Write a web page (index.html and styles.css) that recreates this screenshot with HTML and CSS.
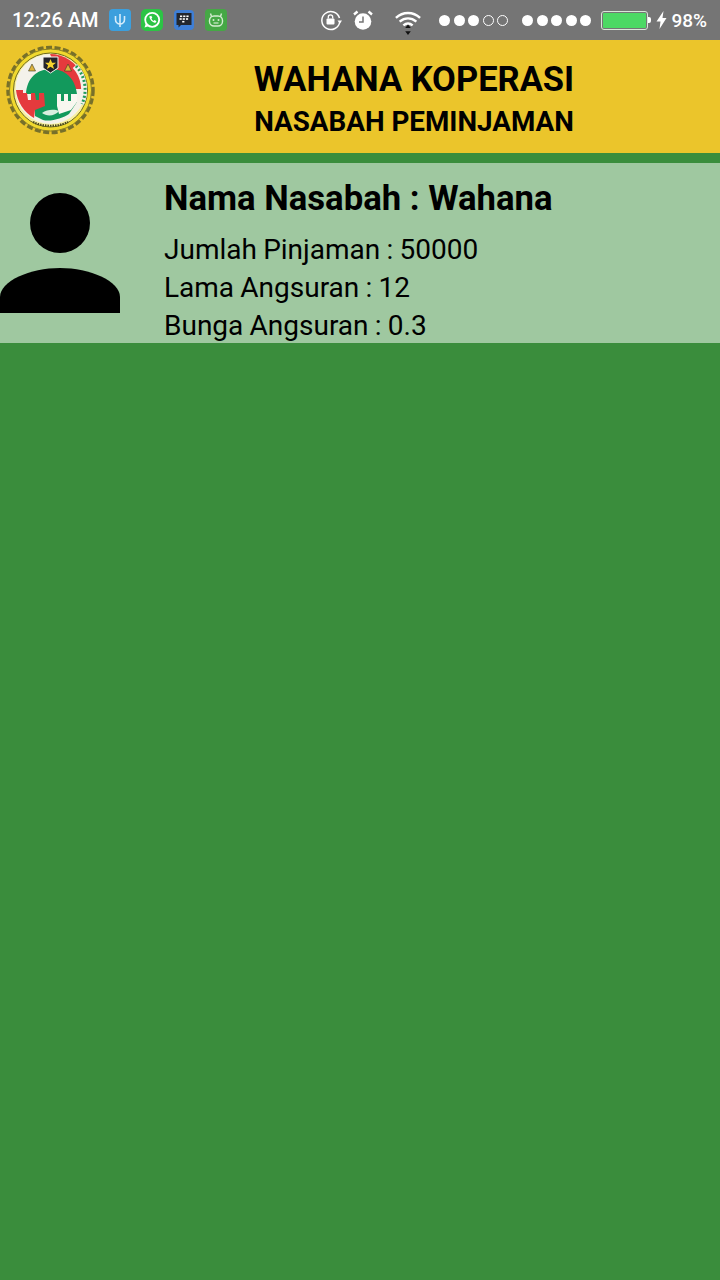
FILE: index.html
```html
<!DOCTYPE html>
<html lang="en">
<head>
    <meta charset="UTF-8">
    <meta name="viewport" content="width=device-width, initial-scale=1.0">
    <title>Wahana Koperasi</title>
    <link rel="stylesheet" href="styles.css">
</head>
<body>
    <div class="status-bar">
        <div class="status-left">
            <span class="clock">12:26 AM</span>
            <svg class="app-icon" viewBox="0 0 22 22"><rect width="22" height="22" rx="4" fill="#3c9fdd"/><path d="M6.500 7v3.500a4.500 4.500 0 0 0 9 0V7M11 5v13" fill="none" stroke="#d5ecfa" stroke-width="1.600"/></svg>
            <svg class="app-icon" viewBox="0 0 22 22"><rect width="22" height="22" rx="5" fill="#2cc445"/><circle cx="11.200" cy="10.800" r="7" fill="none" stroke="#fff" stroke-width="1.800"/><path d="M3.500 18.500l1.500-4.800 3.200 3.200z" fill="#fff"/><path d="M8.200 7.400c.8 3.500 2.700 5.500 6 6.500l1.300-1.600-2-1.200-.9.800c-1-.5-1.700-1.200-2.200-2.300l.9-.9-1-2z" fill="#fff"/></svg>
            <svg class="app-icon" viewBox="0 0 22 22"><rect x="1" y="1" width="20" height="20" rx="4" fill="#3f7fd6"/><path d="M3.500 4h15v12H8l-2.500 2.500V16h-2z" fill="#23272e"/><g fill="#fff"><rect x="7" y="6.500" width="2.200" height="1.600"/><rect x="10.200" y="6.500" width="2.200" height="1.600"/><rect x="13.400" y="6.500" width="2.200" height="1.600"/><rect x="6.500" y="9.200" width="2.200" height="1.600"/><rect x="9.700" y="9.200" width="2.200" height="1.600"/><rect x="12.900" y="9.200" width="2.200" height="1.600"/><rect x="9.200" y="11.900" width="2.200" height="1.600"/></g></svg>
            <svg class="app-icon" viewBox="0 0 22 22"><rect width="22" height="22" rx="4" fill="#45a845"/><rect x="4.500" y="7" width="13" height="10" rx="4.500" fill="none" stroke="#d3ecd0" stroke-width="1.400"/><path d="M6.500 7.500L5.500 4.500M15.500 7.500l1-3" stroke="#d3ecd0" stroke-width="1.400"/><circle cx="8.500" cy="11" r="1" fill="#d3ecd0"/><circle cx="13.500" cy="11" r="1" fill="#d3ecd0"/><path d="M8.500 14h5" stroke="#d3ecd0" stroke-width="1.200"/></svg>
        </div>
        <div class="status-right">
            <svg class="rotate-icon" viewBox="0 0 22 22"><path d="M19.500 9A9 9 0 1 0 19.800 12.500" fill="none" stroke="#fff" stroke-width="1.500"/><path d="M17.500 11.500h4.500l-2.200 3.200z" fill="#fff"/><rect x="6.500" y="9.500" width="8" height="6" rx="1" fill="#fff"/><path d="M8.300 9.500V8a2.200 2.200 0 0 1 4.400 0v1.500" fill="none" stroke="#fff" stroke-width="1.300"/></svg>
            <svg class="alarm-icon" viewBox="0 0 22 22"><circle cx="11" cy="12.500" r="8.300" fill="#fff"/><path d="M11 7.500v5.500H7" fill="none" stroke="#757575" stroke-width="1.500"/><path d="M2 5.500L5.500 2.500M20 5.500L16.500 2.500" stroke="#fff" stroke-width="2.400"/></svg>
            <svg class="wifi-icon" viewBox="0 0 28 28"><path d="M1 8.500C8.500 1.500 19.500 1.500 27 8.500M5 12.500c5.500-4.500 12.500-4.500 18 0M9 16.500c3-2.500 7-2.500 10 0" fill="none" stroke="#fff" stroke-width="2.600"/><path d="M14 15.500l3 4h-6zM14 27l-3-4h6z" fill="#111"/></svg>
            <div class="dots">
                <i class="dot"></i><i class="dot"></i><i class="dot"></i><i class="dot empty"></i><i class="dot empty"></i>
            </div>
            <div class="dots">
                <i class="dot"></i><i class="dot"></i><i class="dot"></i><i class="dot"></i><i class="dot"></i>
            </div>
            <div class="battery"><div class="battery-fill"></div></div>
            <i class="battery-tip"></i>
            <svg class="bolt-icon" viewBox="0 0 11 18"><path d="M7.500 0L.5 10.500h4L3.500 18 10.500 7H6.500z" fill="#fff"/></svg>
            <span class="percent">98%</span>
        </div>
    </div>

    <header class="app-header">
        <svg class="logo" viewBox="0 0 90 92">
            <!-- gear ring -->
            <circle cx="45.500" cy="46" r="42.500" fill="none" stroke="#77702a" stroke-width="3.500" stroke-dasharray="6 2.500"/>
            <circle cx="45.500" cy="46" r="41" fill="#f0d92e" stroke="#8a7f26" stroke-width="1"/>
            <circle cx="45.500" cy="46" r="37" fill="#f8f0a0" stroke="#6d6a20" stroke-width="1"/>
            <!-- inner disc -->
            <circle cx="45.500" cy="45" r="35" fill="#f4f2ea"/>
            <path d="M45 10a35 35 0 0 1 32 21l2 14H60z" fill="#e53a3d"/>
            <!-- right serrated band -->
            <path d="M70 22a35 35 0 0 1 6 38" fill="none" stroke="#f4f2ea" stroke-width="6"/>
            <path d="M71 22a35 35 0 0 1 6 38" fill="none" stroke="#229a5c" stroke-width="3" stroke-dasharray="2 2"/>
            <!-- green dome -->
            <path d="M21 50C22 34 32 25 46 25s24 9 26 25v8l-8 12c-6 4-18 8-26 6l-8-4V50z" fill="#12995c"/>
            <!-- red and white towers -->
            <path d="M11 46h7v3h4l1 7h3v-7h4l1 7h3v-7h5l1 13-10 4-1 8A36 36 0 0 1 11 46z" fill="#e53a3d"/>
            <path d="M52 50h4v7h3v-7h4v7h3v-7h6v8l-6 8-12 4-2-8z" fill="#f8f7f0"/>
            <path d="M37 69c5-4 13-4 17-2-4 5-12 6-17 2z" fill="#d9efe0"/>
            <!-- shield and scales -->
            <path d="M38 13h15v11l-7.500 5-7.500-5z" fill="#24242a" stroke="#f4f2ea" stroke-width="1"/>
            <path d="M45.500 15l1.600 3.800h3.900l-3.100 2.400 1.200 3.800-3.600-2.300-3.600 2.300 1.200-3.800-3.100-2.400h3.900z" fill="#f6d32e"/>
            <path d="M27 20l-3.500 7h7zM63 20l-3.500 7h7z" fill="#dcb23c" stroke="#3a3a20" stroke-width=".6"/>
            <!-- motto band -->
            <path d="M28 78c10 5 25 5 35 0" fill="none" stroke="#4a4a1e" stroke-width="2.200" stroke-dasharray="1.500 1"/>
        </svg>
        <div class="app-title">
            <h1>WAHANA KOPERASI</h1>
            <h2>NASABAH PEMINJAMAN</h2>
        </div>
    </header>

    <div class="strip"></div>

    <main class="nasabah-card">
        <svg class="avatar" viewBox="0 0 120 120">
            <circle cx="60" cy="30" r="30"/>
            <path d="M0 120V104C0 88 30 75 60 75s60 13 60 29v16z"/>
        </svg>
        <div class="nasabah-info">
            <h3>Nama Nasabah : Wahana</h3>
            <p>Jumlah Pinjaman : 50000</p>
            <p>Lama Angsuran : 12</p>
            <p>Bunga Angsuran : 0.3</p>
        </div>
    </main>
</body>
</html>
```

FILE: styles.css
```css
body {
    margin: 0;
    height: 1280px;
    overflow: hidden;
    background-color: #3a8d3c;
    font-family: Roboto, Arial, sans-serif;
    color: #000;
}
h1, h2, h3, p {
    margin: 0;
}
.status-bar {
    height: 40px;
    background-color: #757575;
    color: #fff;
    display: flex;
    align-items: center;
    justify-content: space-between;
    padding: 0 13px 0 12px;
    box-sizing: border-box;
}
.status-left, .status-right {
    display: flex;
    align-items: center;
}
.clock {
    font-size: 20px;
    font-weight: 500;
    width: 97px;
}
.app-icon {
    width: 22px;
    height: 22px;
    margin-right: 10px;
}
.rotate-icon {
    width: 22px;
    height: 22px;
    margin-right: 10px;
}
.alarm-icon {
    width: 22px;
    height: 22px;
    margin-right: 21px;
}
.wifi-icon {
    width: 26px;
    height: 26px;
    margin-top: 5px;
    margin-right: 18px;
}
.dots {
    display: flex;
    gap: 3.5px;
    margin-right: 14px;
}
.dot {
    width: 11px;
    height: 11px;
    border-radius: 50%;
    background-color: #fff;
    box-sizing: border-box;
}
.dot.empty {
    background-color: transparent;
    border: 1px solid #fff;
}
.battery {
    width: 47px;
    height: 19px;
    border: 1px solid #d8e8d8;
    border-radius: 3px;
    box-sizing: border-box;
    padding: 1px;
    margin-left: -4px;
}
.battery-fill {
    height: 100%;
    background-color: #4cd964;
    border-radius: 1px;
}
.battery-tip {
    width: 3px;
    height: 6px;
    background-color: #fff;
    border-radius: 0 2px 2px 0;
    margin-right: 5px;
}
.bolt-icon {
    width: 11px;
    height: 18px;
    margin-right: 4px;
}
.percent {
    font-size: 19px;
    font-weight: 500;
}
.app-header {
    height: 113px;
    background-color: #ebc52b;
    display: flex;
    align-items: flex-start;
    padding-left: 5px;
}
.logo {
    width: 90px;
    height: 92px;
    margin-top: 4px;
    flex-shrink: 0;
}
.app-title {
    flex: 1;
    text-align: center;
    padding-top: 17px;
    padding-left: 13px;
}
.app-title h1 {
    font-size: 34.5px;
    font-weight: 700;
    line-height: 44px;
}
.app-title h2 {
    font-size: 27.8px;
    font-weight: 700;
    line-height: 42px;
}
.strip {
    height: 10px;
    background-color: #3a8d3c;
}
.nasabah-card {
    height: 180px;
    background-color: #9fc8a0;
    display: flex;
    overflow: hidden;
}
.avatar {
    width: 120px;
    height: 120px;
    margin-top: 30px;
    margin-right: 44px;
    flex-shrink: 0;
}
.nasabah-info {
    padding-top: 14px;
}
.nasabah-info h3 {
    font-size: 34.7px;
    font-weight: 700;
    line-height: 42px;
    margin-bottom: 12px;
}
.nasabah-info p {
    font-size: 28px;
    line-height: 38px;
    word-spacing: -0.7px;
}
```
